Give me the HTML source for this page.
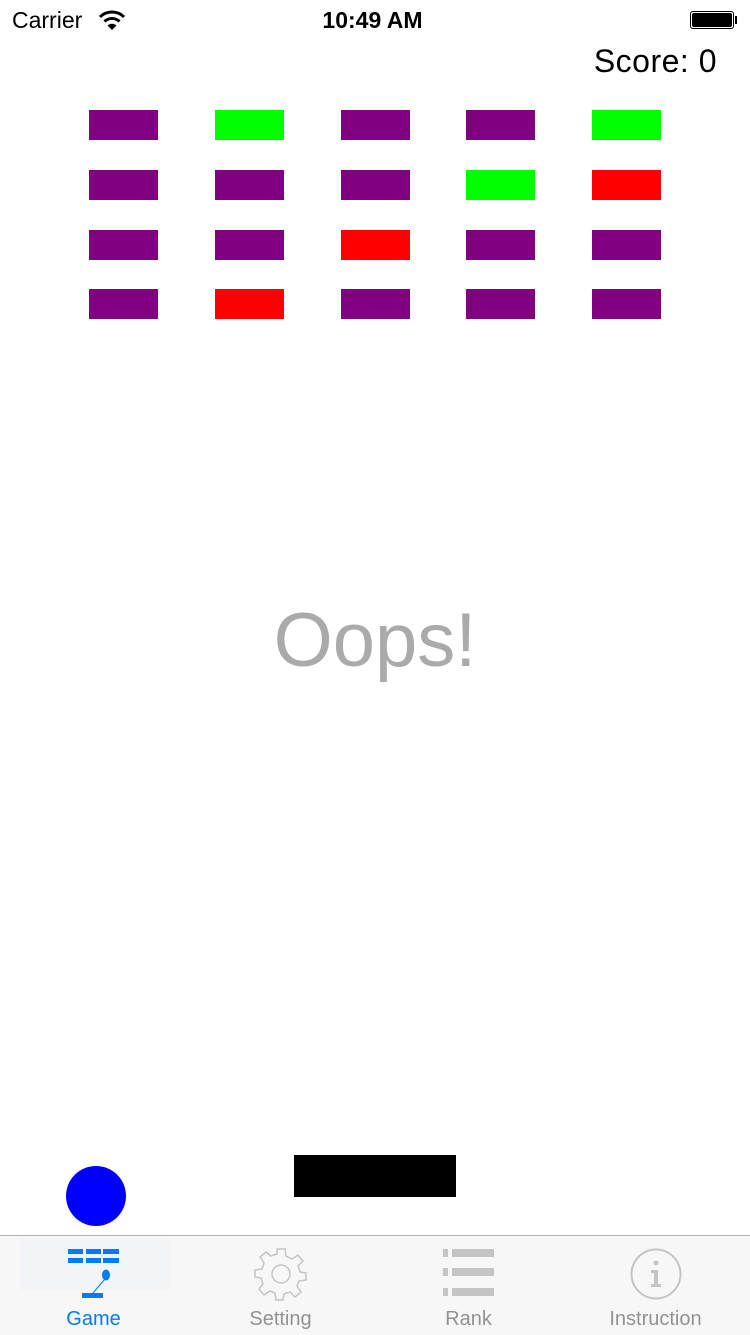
<!DOCTYPE html>
<html><head><style>
body{margin:0;width:750px;height:1334px;position:relative;background:#fff;font-family:"Liberation Sans",sans-serif;overflow:hidden}
.a{position:absolute}
.b{position:absolute;width:69px;height:30px}
.P{background:#800080}.G{background:#00ff00}.R{background:#ff0000}
.lbl{position:absolute;top:1308px;font-size:20px;color:#929292;text-align:center;width:187px}
</style></head><body>
<div class="a" style="left:12px;top:7px;font-size:23px">Carrier</div>
<svg class="a" style="left:98px;top:9px" width="28" height="22" viewBox="0 0 28 22"><path d="M2 8 A17 17 0 0 1 26 8" stroke="#000" stroke-width="3" fill="none"/><path d="M6.5 12.5 A11 11 0 0 1 21.5 12.5" stroke="#000" stroke-width="3" fill="none"/><path d="M14 21 L9.5 16.5 A6.5 6.5 0 0 1 18.5 16.5 Z" fill="#000"/></svg>
<div class="a" style="left:0;width:745px;top:7px;font-size:23px;font-weight:bold;text-align:center">10:49 AM</div>
<div class="a" style="left:690px;top:11px;width:44px;height:18px;border:1px solid #000;border-radius:3px;box-sizing:border-box;padding:1px"><div style="background:#000;width:100%;height:100%;border-radius:2px"></div></div>
<div class="a" style="left:735px;top:16px;width:2px;height:8px;background:#000"></div>
<div class="a" style="right:33px;top:43px;font-size:32px;letter-spacing:0.5px">Score: 0</div>

<div class="b P" style="left:89px;top:110px"></div><div class="b G" style="left:215px;top:110px"></div><div class="b P" style="left:341px;top:110px"></div><div class="b P" style="left:466px;top:110px"></div><div class="b G" style="left:592px;top:110px"></div>
<div class="b P" style="left:89px;top:170px"></div><div class="b P" style="left:215px;top:170px"></div><div class="b P" style="left:341px;top:170px"></div><div class="b G" style="left:466px;top:170px"></div><div class="b R" style="left:592px;top:170px"></div>
<div class="b P" style="left:89px;top:230px"></div><div class="b P" style="left:215px;top:230px"></div><div class="b R" style="left:341px;top:230px"></div><div class="b P" style="left:466px;top:230px"></div><div class="b P" style="left:592px;top:230px"></div>
<div class="b P" style="left:89px;top:289px"></div><div class="b R" style="left:215px;top:289px"></div><div class="b P" style="left:341px;top:289px"></div><div class="b P" style="left:466px;top:289px"></div><div class="b P" style="left:592px;top:289px"></div>

<div class="a" style="left:0;width:750px;top:597px;font-size:76px;color:#aaa;text-align:center;font-weight:300">Oops!</div>

<div class="a" style="left:294px;top:1155px;width:162px;height:42px;background:#000"></div>
<div class="a" style="left:66px;top:1166px;width:60px;height:60px;border-radius:50%;background:#0000ff"></div>

<div class="a" style="left:0;top:1235px;width:750px;height:99px;background:#f7f7f7;border-top:1px solid #b2b2b2"></div>
<div class="a" style="left:20px;top:1238px;width:150px;height:52px;background:#f3f4f7"></div>
<svg class="a" style="left:60px;top:1245px" width="66" height="56" viewBox="0 0 66 56">
<g fill="#007aff"><rect x="8" y="4" width="15" height="5"/><rect x="26" y="4" width="15" height="5"/><rect x="43" y="4" width="16" height="5"/><rect x="8" y="13" width="15" height="5"/><rect x="26" y="13" width="15" height="5"/><rect x="43" y="13" width="16" height="5"/><ellipse cx="46" cy="30" rx="4" ry="5.5"/><rect x="22" y="48" width="21" height="5"/></g>
<line x1="45" y1="34" x2="33" y2="48" stroke="#007aff" stroke-width="1"/></svg>
<svg class="a" style="left:254px;top:1247px" width="54" height="54" viewBox="-27 -27 54 54"><path fill="none" stroke="#c4c4c4" stroke-width="1.5" d="M-4-25L4-25L5-18L11-15L17-19L22-13L17-8L19-2L25-1L25 6L18 7L16 12L20 18L14 23L9 18L3 20L2 26L-5 26L-6 19L-11 17L-17 21L-22 15L-18 10L-20 4L-26 3L-26-4L-19-5L-17-11L-21-17L-15-22L-10-18L-4-20Z"/><circle r="9" fill="none" stroke="#c4c4c4" stroke-width="1.5"/></svg>
<svg class="a" style="left:440px;top:1246px" width="58" height="56" viewBox="0 0 58 56"><g fill="#c4c4c4"><rect x="3" y="3" width="5" height="8"/><rect x="12" y="3" width="42" height="8"/><rect x="3" y="22" width="5" height="8"/><rect x="12" y="22" width="42" height="8"/><rect x="3" y="42" width="5" height="8"/><rect x="12" y="42" width="42" height="8"/></g></svg>
<svg class="a" style="left:628px;top:1246px" width="56" height="56" viewBox="0 0 56 56"><circle cx="28" cy="28" r="24.5" fill="none" stroke="#c4c4c4" stroke-width="2"/><circle cx="28" cy="17" r="2.5" fill="#c4c4c4"/><path d="M23 24H30V38H33V41H23V38H26V27H23Z" fill="#c4c4c4"/></svg>
<div class="lbl" style="left:0;color:#007aff">Game</div>
<div class="lbl" style="left:187px">Setting</div>
<div class="lbl" style="left:375px">Rank</div>
<div class="lbl" style="left:562px">Instruction</div>
</body></html>
